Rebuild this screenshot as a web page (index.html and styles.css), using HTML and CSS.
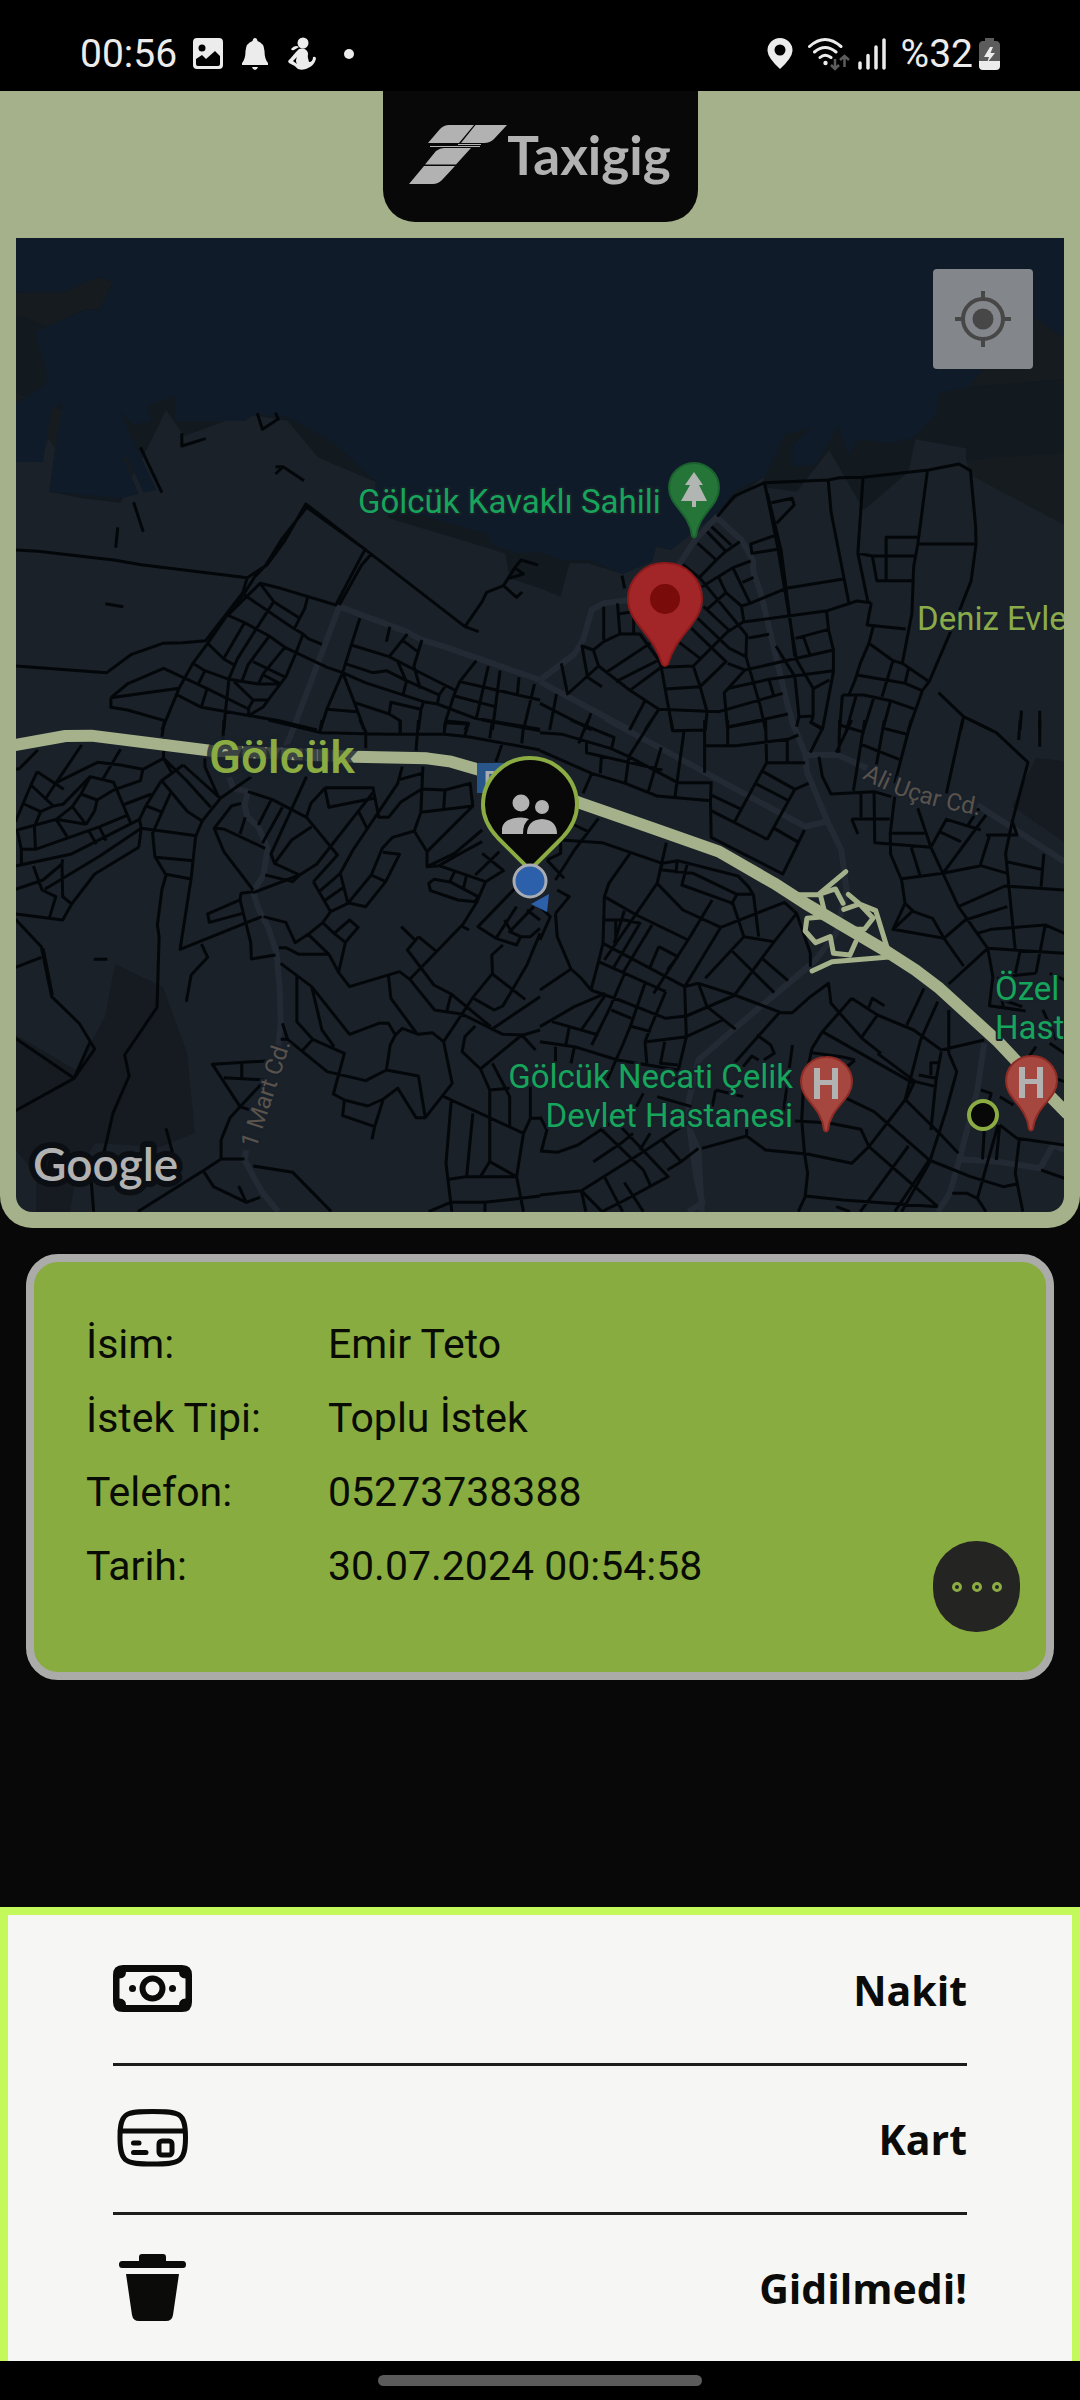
FILE: index.html
```html
<!DOCTYPE html>
<html lang="tr">
<head>
<meta charset="utf-8">
<meta name="viewport" content="width=device-width, initial-scale=1">
<title>Taxigig</title>
<link rel="stylesheet" href="styles.css">
</head>
<body>
<div class="status">
  <div class="status-left">
    <span>00:56</span>
    <svg width="32" height="34" viewBox="0 0 32 34"><path fill-rule="evenodd" d="M5 1H27Q31 1 31 5V28Q31 32 27 32H5Q1 32 1 28V5Q1 1 5 1ZM4 22V27Q4 29 6 29H26Q28 29 28 27V19L23 14L14 22L10 18ZM10 7.500A3.500 3.500 0 1 0 10 14.500A3.500 3.500 0 1 0 10 7.500Z"/></svg>
    <svg width="32" height="34" viewBox="0 0 32 34"><path d="M16 1Q18 1 18.500 4Q25 6 25.500 14Q25.500 22 29 26V28H3V26Q6.500 22 6.500 14Q7 6 13.500 4Q14 1 16 1ZM13 30H19Q18 33 16 33Q14 33 13 30Z"/></svg>
    <svg width="32" height="34" viewBox="0 0 32 34"><circle cx="17" cy="6" r="5.500"/><path d="M5 12Q9 7 13 10L8 13Q6 14 5 12ZM13 12Q20 10 22 16Q21 20 23 25Q27 25 27 20Q30 19 30 22Q28 28 24 30Q18 34 12 32Q8 28 3 26Q1 24 4 22L10 15ZM11 20L7 24L11 27Q9 24 11 20Z" fill-rule="evenodd"/></svg>
    <svg width="32" height="34" viewBox="0 0 32 34"><circle cx="16" cy="17" r="5"/></svg>
  </div>
  <div class="status-right">
    <svg width="26" height="34" viewBox="0 0 26 34"><path fill-rule="evenodd" d="M13 1A12.500 12.500 0 0 1 25.500 14Q25 21 13 32Q1 21 .5 14A12.500 12.500 0 0 1 13 1ZM13 7.500A5.500 5.500 0 1 0 13 18.500A5.500 5.500 0 1 0 13 7.500Z"/></svg>
    <div class="network">
      <svg width="42" height="34" viewBox="0 0 42 34"><g fill="none" stroke="#ececec" stroke-width="3" stroke-linecap="round"><path d="M1.500 9.500Q17 -4.500 33 9.500M6.500 15Q17 6 28 15M12 20.500Q17 16 23 20.500"/></g><circle cx="17.500" cy="26" r="2.200"/><path d="M27 22V31M23 28L27 32L31 28M36.500 30V19M32 23L36.500 19L41 23" fill="none" stroke="#5c5c5c" stroke-width="2.500"/></svg>
      <svg width="28" height="34" viewBox="0 0 28 34"><path d="M2 26V31M10 18.500V31M18 10V31M26 3V31" stroke="#ececec" stroke-width="3.500" stroke-linecap="round"/></svg>
    </div>
    <div class="battery">
      <span>%32</span>
      <svg width="21" height="34" viewBox="0 0 21 34"><path d="M6 1H15V4H18Q21 5 21 8V26H0V8Q0 5 3 4H6Z" fill="#5c5c5c"/><path d="M0 24H21V29Q21 33 17 33H4Q0 33 0 29Z"/><path d="M11 10L5 20H10L8 26L16 16H11.500L14 10Z"/></svg>
    </div>
  </div>
</div>

<main>
  <section class="map-frame">
    <header class="brand">
      <svg width="98" height="59" viewBox="409 125 98 59" fill="#b2b2b2"><path d="M428 143L440 129Q444 125 449 125H474L459 143ZM461 143L475.500 125H507L494 139Q490 143 484 143ZM458 144H481V145H458ZM430 146H480V147H430ZM425 164.500L436 151Q440 148 444 148H471L456 164.500ZM409 184L424 166H455L442 180Q438 184 433 184Z"/></svg>
      <span>Taxigig</span>
    </header>
    <div class="map">
      <svg class="map-canvas" viewBox="16 238 1048 974" role="img" aria-label="Gölcük">
        <rect x="16" y="238" width="1048" height="974" fill="#1a2129"/>
        <!-- coast and sea, west -->
        <g transform="translate(0 230) scale(.34439 .33333)">
          <path fill="#12191f" d="M45 20H1568V1075L1480 1045L1467 970L1130 865L1090 755L925 683L835 572L735 555L710 573L655 573L535 618L482 540L425 660L350 818L240 805L143 785L45 700Z"/>
          <path fill="#0f1b28" d="M45 20H1568V967L1500 970L1430 945L1410 910L1200 850L1090 820V755L970 640L835 560L735 555L710 573H508V497L425 530L440 573L388 585L345 540L390 640L455 780L350 805L143 785L160 655L180 520L150 535L125 695L45 698V520L78 502L130 467L137 440L103 305L135 290L245 240H290L327 158L288 140L185 187L45 188Z"/>
          <path fill="#161b20" d="M45 188L185 187L288 140L327 158L290 238H245L135 290L70 262L45 260ZM45 490L78 502L45 518Z"/>
          <path fill="#1a2129" d="M150 535L180 542L160 655L143 785L45 790V697L125 695ZM358 685L372 685L420 795L405 798Z"/>
          <path fill="#161b20" d="M150 535L180 542L160 655L140 625L134 645ZM358 685L372 685L390 728L382 742Z"/>
        </g>
        <!-- coast and sea, east -->
        <g transform="translate(540 230) scale(.34439 .33333)">
          <path fill="#12191f" d="M0 20H1523V670L1237 690V655L1090 628L1070 725L940 840L840 660L745 785L640 770L400 960L240 1032L140 1000H85L60 1100L0 1075Z"/>
          <path fill="#0f1b28" d="M0 20H1523V325L1440 265L1380 300L1245 470L1157 490L1150 555L1080 625L1015 640L920 628L897 678L865 588L800 705L733 710V645L787 595L712 612L655 738L565 785L515 850L380 960L338 950L325 995L240 1032L140 990H60L0 965Z"/>
          <path fill="#161b20" d="M1523 325L1440 265L1380 300L1245 470L1523 447ZM1237 690L1523 670V885L1250 735Z"/>
          <path fill="#1a2129" d="M380 960L515 850L650 740L640 850L400 1100L240 1032L325 995L338 950Z"/>
        </g>
        <path fill="#151b21" d="M115 964L163 987L187 1053L195 1133L160 1147L95 1143L76 1175L70 1212H36V1175L16 1150V1035L76 1070L105 1017ZM1036 758L1064 761V842L1012 806Z"/>
        <g class="avenue">
          <path transform="translate(0 230) scale(.34439 .33333)" d="M850 1500L985 1130L1180 1205L1225 1230L1290 1250L1568 1350"/>
          <path transform="translate(540 230) scale(.34439 .33333)" d="M0 1350L100 1272L125 1230L150 1140L185 1120L260 1110L400 1010L450 930L512 862L585 930L618 990L620 1030L640 1085L720 1430L740 1500M0 1355L260 1500"/>
          <path transform="translate(0 720) scale(.34439 .33333)" d="M862 0L830 80M665 170L678 205L720 215L710 255L718 290L750 320L777 385L765 465L735 515L750 565L780 625L803 700L812 800L815 910L807 990M715 1290L710 1320L760 1415L808 1475"/>
          <path transform="translate(540 720) scale(.34439 .33333)" d="M190 -5L770 320L830 305M730 0L770 100L775 155L835 305L875 390L890 510L860 640L800 720L640 860L560 930L460 1020L430 1150L435 1230L460 1290L470 1475M435 1230L455 1380L472 1450L430 1475M780 740L640 860M770 105H865L950 145M1270 255L1523 425M1290 970L1270 1110L1220 1310L1190 1420L1155 1475M1220 1318L1330 1325L1452 1345L1490 1275L1523 1290"/>
        </g>
        <g class="street">
          <path transform="translate(0 230) scale(.34439 .33333)" d="M45 960L110 964L330 990L410 1004L718 1043L775 1005L825 935L888 822L1060 958L1350 1190L1390 1205M718 1043L705 1088L597 1232L530 1238L473 1240L382 1273L310 1328L45 1308M888 835L820 925L770 1008L740 1040L708 1092L660 1155L603 1240L560 1300L520 1375L478 1480L470 1500M888 830L1060 958L975 1125L815 1075L755 1060L660 1157M1078 972L1050 1005L985 1125M1350 1190L1400 1115L1413 1087L1462 1067L1495 1013L1513 990L1562 1005M1495 1013L1520 1032L1475 1046M1462 1067L1500 1102L1516 1086M710 1095L845 1190L880 1212L895 1226L935 1243M755 1060L795 1115L868 1163M893 1102L885 1135L855 1195M795 1115L745 1195L690 1285L665 1345L655 1440L650 1500M660 1155L710 1178L782 1218L827 1252L950 1312L995 1328M710 1178L650 1285M603 1240L650 1287L680 1305M782 1218L720 1305L703 1352M827 1252L765 1330L750 1362M735 1295L830 1342M765 1335L812 1360M880 1212L855 1280L830 1340L780 1408L765 1430L722 1457V1435L735 1410L680 1355M560 1300L595 1322L665 1348L750 1362H812M595 1322L577 1360M735 1410H775M322 1403L370 1362L475 1315L600 1375L722 1437M322 1403L520 1375M322 1403V1432L370 1440L478 1472M600 1380L585 1430M515 1395L585 1432L810 1472L920 1500M1045 1165L1020 1245L995 1328L950 1435L930 1500M1132 1190L1122 1235M1183 1212L1130 1280M1170 1232L1213 1265M1225 1230L1202 1308L1220 1375M1020 1245L1130 1280L1205 1320L1320 1380M1155 1295L1180 1355L1170 1395M1000 1300L1082 1328L1122 1322L1180 1352L1275 1395L1292 1370M995 1328L1060 1358L1230 1415L1270 1422L1380 1465L1568 1498M995 1328L1030 1420L1058 1500M950 1438L1035 1445M1030 1418L1130 1452L1162 1472V1500M1130 1452L1135 1417L1222 1438M1230 1415L1222 1440L1215 1500M1383 1292L1335 1355L1320 1390L1295 1470L1290 1500M1335 1355L1568 1410M1418 1308L1383 1465M1452 1322L1430 1500M1507 1342L1502 1397M1552 1362L1520 1500M1320 1398L1438 1430M1275 1395L1270 1422M1295 1473L1360 1480L1350 1500M747 550L762 598L808 567L800 548M528 610V648L597 626M408 652L470 788M388 817L416 905M342 892L336 953M306 1121L358 1130M800 710H822L883 752M822 710L800 732"/>
          <path transform="translate(540 230) scale(.34439 .33333)" d="M515 860L565 798L652 758L837 750L870 743L938 742L1128 720L1217 702L1250 722L1265 890L1266 943L1252 1052L1215 1150L1130 1355L1110 1382L1070 1500M652 758L690 950L745 1290L793 1375V1458L753 1460M660 790L700 960L740 1280M672 818L732 805L738 825L687 880M685 915L612 942L615 970L690 958M837 750L845 845L897 1120M938 742L923 970L952 1115M1125 722L1097 942L1085 1010L1080 1150L1052 1300M923 970L965 978L1093 977M1097 942H1266M1097 922H1005V1050M965 978L978 1052H1085M962 1118L950 1185L1062 1197M968 1188L955 1240L930 1300L915 1350L898 1392M955 1240L1025 1292L1052 1300L1130 1355M1025 1292L993 1400M920 1335L1060 1360L1110 1382M1070 1315L1060 1360M878 1395H940L1018 1412L1090 1438M878 1395L870 1500M918 1397L890 1500M970 1400L940 1500M1018 1412L995 1500M1157 1388L1230 1460L1310 1500M1230 1460L1222 1500M1398 1442L1394 1500M1451 1442V1500M885 1046L715 1075L610 1120L585 1128M962 1118L920 1113L835 1142L590 1176L545 1205L445 1308M832 1142L838 1200L852 1260V1325L820 1500M742 1225L838 1198M765 1220L783 1272M852 1260L595 1320L545 1300M852 1322L665 1348L548 1375M840 1350L795 1375M685 1248L740 1340L752 1460L745 1490M787 1478L793 1460M787 1478L820 1498M485 905L538 962M498 890L555 945M580 935L538 965L512 990L465 1040M458 940L512 990M415 1003L465 1045L600 1215L598 1280L640 1430L655 1500M470 1070L560 1013L612 993M518 1040L540 1088L485 1138M560 1013L610 1120M588 1057L620 1042M540 1088L585 1128L592 1176M605 1224L665 1213M475 1130L548 1200M458 1165L550 1255L598 1280M440 1195L540 1295L465 1370M405 1238L465 1285M352 1312L445 1308L465 1370L485 1445L480 1500M365 1377L465 1370M595 1320L535 1388L545 1500M345 1438L520 1445L705 1390M665 1348L678 1395M545 1492L720 1452M238 1037L246 1075M185 1130V1230M225 1120L232 1212H290L345 1290L352 1312L385 1500M228 1152L270 1145M272 1150V1210M232 1212L185 1235L155 1260L170 1308L260 1380L345 1438L305 1500M155 1260L122 1248L138 1342L180 1370M170 1308L80 1392L62 1300M320 1240L195 1325M345 1290L220 1355M352 1312L260 1382M305 1412L260 1500M0 1420L150 1500M48 1392L28 1500M148 1450L130 1500"/>
          <path transform="translate(0 720) scale(.34439 .33333)" d="M478 0L470 50M650 0L647 75M780 0L930 38L1130 43H1290L1360 50L1568 90M935 0L928 38M1045 0L1062 35V85M1162 0V42M1215 0L1208 92M1290 40L1293 8L1360 12L1350 45M1430 0L1422 55M1520 20L1515 70M1460 65L1440 125M1400 0L1568 32M237 75L165 185L130 240M45 147H55L110 90M350 88L297 180M475 115L415 148L350 135L283 127L165 187M475 55V115L497 155M415 148L408 182L330 210M108 155L90 195L45 305M108 155L185 208M90 195L155 258L183 253L262 170L330 187L380 310M70 252L118 275L155 258M118 275L100 320L103 388H62L50 330L163 298L195 350M163 298L210 260L235 222L262 170M210 260L250 313M163 298L250 313M275 272L282 240L235 222M282 240L330 210M250 313L275 272M62 388V435M103 388L290 320L367 287M405 298L205 403L45 438M410 325L290 408L130 508M258 333L280 372M288 320L308 362M45 508L125 480L180 432L182 418M97 438L122 510L162 530L143 595M180 432L182 530L208 552M403 382L275 462L208 552L182 600L45 582M405 298L410 325L403 382M410 325L570 347M357 255L440 222M468 183L425 255L405 298M425 258L467 275M497 215L443 340L450 410L482 465M468 180L545 275L587 303M475 115L540 180L612 262M587 303L568 350L555 475L523 688L760 590M532 135L468 183M532 135L640 235L587 303M595 115V140L635 232M640 235L730 170M450 412L562 422M482 463L555 477M482 465L470 510L457 615L462 650L456 862L362 1005L375 1068L328 1180L298 1315L265 1385L272 1475M585 672L603 712L555 765L541 845M45 598L120 680L150 830L230 910L275 987L215 1075L45 1172M125 685L152 825M120 712L45 742M45 955L215 1075L262 965M272 718H312M720 215L790 238L890 292L980 405L910 485M788 238L750 315M820 262L762 370M700 250L672 258L622 325L650 395L735 510M622 325L650 327L770 385M712 292L697 342M890 170L787 402L797 430L870 465L735 518M943 205L903 250L890 290M943 203H1083L1100 292H1128L1165 245L1225 207L1292 210L1365 190L1373 258L1222 277M943 203L955 262L1085 235M1085 215L920 432L870 465L850 485L770 465M1040 272L1068 330M905 320L847 360L797 430M1168 140L1155 190L1025 390L988 460L930 512M1228 140L1222 277L1203 333L1140 352L1110 385L1078 465L1010 550L960 575L910 485M1155 180L1225 160M1292 210L1288 272M1203 333L1240 395V440L1320 400L1400 330M1373 258L1240 395M1112 397L1160 403L1120 485L1062 560L1010 548M1078 465L1120 485M988 460L1010 548M945 540L1000 500M1245 490L1260 478L1310 487L1388 530L1380 545L1330 540L1250 512ZM1240 440L1275 437L1410 485L1465 450M1320 455L1305 487M1355 465L1345 508M1400 400L1460 450M1380 465L1450 395M1275 437L1320 410L1400 365M1410 485L1385 545L1345 612L1190 778L1160 755L1015 800L983 757L955 703L895 643M1340 618L1362 630M960 575L937 608L895 643L857 668L830 607L765 590M937 608L970 640L1015 600L1040 622L1003 667L983 757M970 640L1003 667M697 540L603 582L608 607L705 580M735 515L700 520L697 540L728 667L730 717L800 705M810 683H830L868 703H955M815 730L905 800L1015 943L1100 910H1128L1148 945L1168 925L1215 943L1255 938L1288 965L1313 1090L1235 1193H1208L1155 1105L1113 1137L1068 1158L1000 1140L968 1122L1000 1000L908 958L862 905V768M905 800L935 930L970 980M820 910L835 958L950 1055L1062 1082L1122 1050L1215 1068L1235 1193M908 958L878 992M1148 945L1133 975L1122 1050M815 958H835M1128 768L1135 835L1210 940M1165 620L1207 662M1215 650L1183 690L1260 795L1310 822L1425 920M1215 650L1268 695M1190 778L1262 870L1343 883L1460 943L1520 945L1568 930M1310 822L1297 875M1288 965L1375 830L1430 760L1428 705L1460 675M1375 835L1435 870L1460 858L1530 735L1568 640M1430 762L1525 838M1425 930L1568 830M1500 500L1388 620L1440 655L1500 675L1512 650L1480 635L1550 560M1380 918L1350 950L1342 995L1395 1047L1515 945L1555 990M1395 1047L1422 1110V1325L1500 1370L1520 1240L1283 1127M1422 1110L1480 1105M1430 1030L1480 1130V1222M1310 1145L1295 1330L1312 1475M1373 1180L1355 1370M1303 1378L1353 1370H1500L1520 1475M1422 1325L1395 1370M1245 1475L1308 1447H1408L1568 1428M1408 1447V1475M1520 1240L1540 1195H1568M1540 1195V1100M1000 1140L995 1187L1088 1220L1080 1258M1113 1137L1088 1220M785 1022L617 1033L697 1160L770 1080L650 1073M702 1030V1072M697 1160L735 1173M697 1160L668 1193L642 1260V1317H710M642 1317L590 1352L400 1475M590 1352L620 1400L715 1447L755 1432M715 1447L693 1398M735 1338L850 1357L962 1475M482 1225L508 1325M1465 600L1485 635M1440 655L1500 560M1530 570L1568 600M1512 650L1540 650L1568 625"/>
          <path transform="translate(540 720) scale(.34439 .33333)" d="M0 38L65 43L205 85L258 110L400 188M0 92L150 160L248 190L340 228L495 242M150 160L125 220M178 112L175 160M135 68V98L355 150M140 0L112 70M90 0L215 52L208 85M325 0L258 110L248 190M352 82L313 220M418 35L392 230M380 0L385 32L478 30M478 0V158M478 77H570L720 58L750 45M545 0V77M655 0L658 128H770M718 57V128M658 128L565 305M648 155L740 208L780 190M740 208L660 358M625 190L718 240M400 188H497L495 242L497 352L705 462L768 330M497 225L585 268M497 272L660 358M680 325L752 368M548 20L655 0M783 5L820 25L785 98M870 0L868 98M905 0L860 98M870 15L943 38M943 0L910 212M1000 0L975 145M998 25L1063 42M1078 0L1030 190M930 72L1043 118M810 110L820 170L845 222L970 215L1020 230M932 218V292M970 218L972 368L1135 382M905 297H1015M905 297L923 342M1030 230L1017 340L1018 402L1050 480L1060 550L1025 628L1173 655L1235 600L1357 560M1018 340H1117M1045 477L1170 460L1280 437L1357 460M1078 382L1103 465M1097 265L1135 382L1215 560L1300 685L1315 770L1305 857L1410 873M1227 0L1180 220M1250 0L1325 38L1417 127L1370 310L1352 400L1380 690M1394 0L1390 60M1451 0V80M1135 382L1180 298L1280 330M1295 345H1385L1370 300M1160 335L1222 365M1295 285L1170 460M1275 265L1240 320M1305 348L1278 437M1355 425L1455 448M1463 402L1455 500M1215 560L1350 498L1523 510M1270 640L1310 628L1467 615L1523 640M1300 685L1523 700M1173 655L1230 738M1060 550L1085 575L1140 595L1173 655M1025 628L1080 575M1187 792L1300 685M1467 615L1440 760M1395 690L1380 760M1345 770L1440 760M60 360L180 368L355 430L400 422L575 468L605 500L620 525L635 650M265 395L200 490L187 530L183 670L170 725L148 810M367 368L340 490L187 720M355 430L340 490L415 570L525 622L710 547L745 580L680 665L565 825M427 435L412 495L560 550M398 422L395 460M355 450L445 460L572 523H620M572 523L555 555M187 530L280 585L430 660M500 540L430 660L330 820M525 622L420 800M187 600H245L290 610L215 740M220 600V675M325 615L240 760M245 572L215 670M183 670L420 800L460 790L565 825L700 878H733L785 830L838 790L845 850L935 955L990 1000M170 725L365 815M560 550L592 650L680 665M592 650L480 775M745 580L785 700V740M645 715L720 782M555 690L680 818M460 790L485 860L568 928M345 680L400 710L370 750M345 680L318 745M245 762L200 870L150 975M305 790L262 920L240 975M365 815L318 930L305 965M148 810L230 840M207 870L265 895M230 840L365 895L425 888L568 825M420 800L425 950L310 965M425 950L530 900M262 918L322 935M0 920L100 860L190 820M0 810L90 747L120 775L148 810M35 905L170 945M85 920L75 975M0 965L100 980L225 1020L400 1050M45 980V1030M100 980L90 1030M190 825L120 930M305 965L310 1030M362 965L350 1030L400 1035M425 950L395 1080M240 975L195 1080M45 580L50 650L90 747M0 560L30 590L0 660M20 420L70 475M50 510L85 530L45 580M170 295L100 390L45 480M60 360V400L20 420M100 315L140 335M695 878L555 1040M630 945L670 975L680 1000L650 1020M733 975L705 1190M590 1040L615 1008L635 1020M980 1000L1090 1085M905 835L980 885L1085 930L1165 990M1187 1000L1210 1055L1180 1170L1130 1330L1050 1475M905 835L820 935L790 985L765 1100L760 1200L768 1300L777 1360L770 1430L750 1475M820 935L1085 1090L1062 1140L1160 1240L1215 1300M980 885L935 950M955 862L965 835L1000 857M1115 805L1065 915M1155 845L1105 960L1060 1140M1187 870V1000M1165 990L1290 960M1165 995L1150 1080L1135 1230M790 998L875 1010L915 1020M1090 1085L1150 1100M1100 1065L1150 1075M1135 1065V1028H1162M915 1020L880 1050M890 1135L970 1175L1130 1320L1250 1370L1345 1400L1385 1392M740 1203L835 1208L932 1228L955 1280L1155 1460M955 1280L905 1330L780 1303L655 1290L600 1248L470 1285M1060 1140L955 1280M1070 1278L930 1475M1130 1320L1030 1475M770 1428L880 1440L1155 1460M1197 1420H1240L1270 1435L1295 1475M1330 1215L1270 1435M1290 1232L1285 1318M1335 1215L1325 1320M1335 1215L1385 1255L1523 1275M1392 1255L1380 1360L1402 1475M1455 1350L1523 1375M1335 1130L1375 1155M1280 1110L1310 1120L1300 1160M860 1460L900 1475M0 1293L50 1297L110 1275L190 1220L240 1180M155 1325L235 1270L270 1240M0 1425L120 1412L300 1295L440 1200M120 1412L133 1475M120 1412L180 1475M188 1372L240 1475M245 1388L300 1475M175 1225L300 1350L320 1395M230 1215L372 1370L247 1440L180 1475M350 1255L410 1325L460 1285M410 1325L370 1350M320 1240L290 1290M600 1248V1220M340 1130L440 1160M300 1120L280 1160M510 1110L500 1160M510 1110L590 1130M1345 840L1400 860M1480 970L1523 1000M1440 980L1400 1040M1460 870L1500 960M0 1190L20 1230L5 1290M1330 770L1345 860M1480 760L1523 780M1480 1070L1523 1085"/>
        </g>
        <g class="highway">
          <path transform="translate(0 720) scale(.34439 .33333)" d="M40 76L190 48L265 47L610 92L1030 110L1240 115L1310 125L1400 152L1568 200L1673 245"/>
          <path transform="translate(540 720) scale(.34439 .33333)" d="M0 200L105 245L320 322L520 395L680 490L770 550L1000 690L1090 750L1160 805L1330 965L1440 1085L1530 1180"/>
          <path class="ramp" transform="translate(540 720) scale(.34439 .33333)" d="M745 524H808L888 455M808 524L858 507L880 550M815 528L825 570M882 568L928 552L895 523M928 552L975 572L1010 690L1035 715M928 552L967 595L942 628H910M825 590L775 595L770 633L800 668L843 650L852 700L900 705L917 665M790 753L848 725L1005 712L1035 710"/>
        </g>
        <!-- place labels -->
        <g class="poi-label">
          <text x="358" y="513">Gölcük Kavaklı Sahili</text>
          <text x="793" y="1088" text-anchor="end">Gölcük Necati Çelik</text>
          <text x="793" y="1127" text-anchor="end">Devlet Hastanesi</text>
          <text x="995" y="1000">Özel</text>
          <text x="995" y="1039">Hast</text>
        </g>
        <text class="district" x="917" y="630">Deniz Evle</text>
        <text class="town" x="209" y="773">Gölcük</text>
        <text class="road-name" transform="translate(256 1149) rotate(-72)">1 Mart Cd.</text>
        <path id="ali-ucar" fill="none" d="M862 778Q905 804 990 817"/>
        <text class="road-name"><textPath href="#ali-ucar">Ali Uçar Cd.</textPath></text>
        <text class="google" x="33" y="1181">Google</text>
        <!-- pins -->
        <path d="M477 763H505V793H477Z" fill="#28568a"/><text class="parking" x="484" y="788">P</text>
        <path d="M694 463A25 25 0 0 1 719 488C719 506 699 513 696 536Q694 539 692 536C690 513 669 506 669 488A25 25 0 0 1 694 463Z" fill="#257539" stroke="#1b6230" stroke-width="2"/>
        <path d="M694 472L703 485H699L707 501H696V507H692V501H681L690 485H685Z" fill="#b1b6b2"/>
        <path d="M665 563A36 36 0 0 1 702 599C702 623 676 634 668 664Q665 668 662 664C654 634 628 623 628 599A36 36 0 0 1 665 563Z" fill="#a22527" stroke="#8d1a1b" stroke-width="2"/><circle cx="665" cy="599" r="15" fill="#790b0a"/>
        <g id="hospital"><path d="M826 1057A25 25 0 0 1 852 1082C852 1100 830 1107 828 1130Q826 1133 824 1130C822 1107 801 1100 801 1082A25 25 0 0 1 826 1057Z" fill="#a5463f" stroke="#902c26" stroke-width="2"/><path d="M814 1068H820V1080H832V1068H838V1099H832V1085H820V1099H814Z" fill="#b2b2b2"/></g>
        <use href="#hospital" x="205" y="-1"/>
        <circle cx="983" cy="1115" r="14" fill="#080808" stroke="#8bab43" stroke-width="4"/>
        <path d="M530 758A47 47 0 0 1 577 805Q577 822 562 838L530 870L498 838Q483 822 483 805A47 47 0 0 1 530 758Z" fill="#080808" stroke="#8bab43" stroke-width="4"/>
        <path d="M521 794.500A8.500 8.500 0 1 0 521 811.500A8.500 8.500 0 1 0 521 794.500ZM542 800A7 7 0 1 0 542 814A7 7 0 1 0 542 800ZM502 834V828Q504 818 521 817.500Q526 817.500 529 819Q523 823 523 834ZM527 834Q527 820 542 819Q557 820 557 834Z" fill="#b2b2b2"/>
        <path d="M531 904L549 894L547 912Z" fill="#2d60aa"/><circle cx="530" cy="881" r="16" fill="#2d60aa" stroke="#a9adb3" stroke-width="3"/>
      </svg>
      <button class="locate" aria-label="Konumum"><svg width="60" height="60" viewBox="-30 -30 60 60"><g fill="none" stroke="#474747" stroke-width="4"><circle r="20"/><path d="M0 -20V-28M0 20V28M-20 0H-28M20 0H28"/></g><circle r="10.500" fill="#474747"/></svg></button>
    </div>
  </section>

  <section class="request">
    <dl class="details">
      <dt>İsim:</dt><dd>Emir Teto</dd>
      <dt>İstek Tipi:</dt><dd>Toplu İstek</dd>
      <dt>Telefon:</dt><dd>05273738388</dd>
      <dt>Tarih:</dt><dd>30.07.2024 00:54:58</dd>
    </dl>
    <button class="more" aria-label="Seçenekler"><svg width="50" height="12" viewBox="0 0 50 12" fill="none" stroke="#8bab43" stroke-width="3"><circle cx="5" cy="6" r="3.500"/><circle cx="25" cy="6" r="3.500"/><circle cx="45" cy="6" r="3.500"/></svg></button>
  </section>
</main>

<section class="sheet">
  <button class="option">
    <svg width="80" height="80" viewBox="0 0 80 80"><path fill-rule="evenodd" d="M10 15H69Q79 15 79 25V52Q79 62 69 62H10Q0 62 0 52V25Q0 15 10 15ZM13 22Q13 28 6.500 28.500V48.500Q13 49 13 55H66Q66 49 72.500 48.500V28.500Q66 28 66 22Z"/><circle cx="39.500" cy="38.500" r="10" fill="none" stroke="#0b0b09" stroke-width="6"/><circle cx="19.500" cy="38.500" r="3.500"/><circle cx="59.500" cy="38.500" r="3.500"/></svg>
    <span>Nakit</span>
  </button>
  <button class="option">
    <svg width="80" height="80" viewBox="0 0 80 80" fill="none" stroke="#0b0b09" stroke-width="5" stroke-linecap="round"><path d="M39.500 12.500C66 12.500 72.500 13 72.500 38.500S66 65 39.500 65S7 64 7 38.500S13 12.500 39.500 12.500ZM7 32H72M20.500 44H26M20.500 53.500H33"/><rect x="46" y="42" width="13" height="14" rx="3"/></svg>
    <span>Kart</span>
  </button>
  <button class="option">
    <svg width="80" height="80" viewBox="0 0 80 80"><path d="M29 6H50Q53 6 53 9V13H70Q73 13 73 16.500T70 20H9Q6 20 6 16.500T9 13H26V9Q26 6 29 6ZM13 26H66L60 67Q59 73 53 73H26Q20 73 19 67Z"/></svg>
    <span>Gidilmedi!</span>
  </button>
</section>
<div class="gesture"><span></span></div>
</body>
</html>
```
FILE: styles.css
```css
* { box-sizing: border-box; }
body {
  margin: 0;
  min-height: 100vh;
  display: flex;
  flex-direction: column;
  background: #080808;
  font-family: Roboto, "Noto Sans", sans-serif;
}
svg { display: block; flex: none; }
button { border: 0; padding: 0; font: inherit; color: inherit; cursor: pointer; }

.status {
  height: 91px;
  padding: 16px 80px 0;
  display: flex;
  align-items: center;
  justify-content: space-between;
  background: #000;
  color: #ececec;
  fill: #ececec;
  font-size: 39px;
  line-height: 48px;
}
.status-left, .status-right { display: flex; align-items: center; gap: 15px; }
.network { display: flex; gap: 8px; }
.battery { display: flex; align-items: center; gap: 6px; }

main { flex: 1; }
.map-frame {
  padding: 0 16px 16px;
  background: #a5b18a;
  border-radius: 0 0 32px 32px;
}
.brand {
  width: 315px;
  height: 131px;
  margin: 0 auto 16px;
  padding-bottom: 4px;
  display: flex;
  align-items: center;
  justify-content: center;
  background: #080808;
  border-radius: 0 0 32px 32px;
  color: #b2b2b2;
  font: 700 53px/62px Lato, sans-serif;
}
.map {
  position: relative;
  overflow: hidden;
  border-radius: 0 0 16px 16px;
}
.map-canvas { width: 100%; height: auto; }
.map-canvas path { vector-effect: non-scaling-stroke; }
.avenue, .street, .highway { fill: none; stroke-linejoin: round; }
.avenue { stroke: #242a34; stroke-width: 6px; }
.street { stroke: #04070a; stroke-width: 3px; }
.highway { stroke: #a5b18a; stroke-width: 12px; stroke-linecap: round; }
.ramp { stroke-width: 5px; }
.poi-label { fill: #17a45b; font-size: 33px; }
.district { fill: #8bab4a; font-size: 33px; }
.town { fill: #8bab43; font-size: 47px; font-weight: 500; }
.road-name { fill: #5a534b; font-size: 24px; }
.town, .poi-label, .road-name, .district, .google { paint-order: stroke; stroke: #18202a; stroke-width: 4px; stroke-linejoin: round; }
.town { stroke-width: 9px; stroke-opacity: .75; }
.google { fill: #b2b2b2; stroke: #0b0f14; stroke-width: 12px; font: 600 46px Lato, sans-serif; }
.parking { fill: #a9adb3; font-size: 24px; font-weight: 700; }
.locate {
  position: absolute;
  top: 31px;
  right: 31px;
  width: 100px;
  height: 100px;
  display: grid;
  place-items: center;
  background: #83868a;
  border-radius: 4px;
}

.request {
  margin: 26px 26px 0;
  padding: 45px 26px 40px 52px;
  display: flex;
  justify-content: space-between;
  border: 8px solid #ababa9;
  border-radius: 32px;
  background: #88ac40;
  color: #080c04;
}
.details {
  flex: 1;
  margin: 0 0 29px;
  display: grid;
  grid-template-columns: 242px 1fr;
  font-size: 41px;
  line-height: 74px;
}
.details dd { margin: 0; }
.more {
  align-self: flex-end;
  width: 87px;
  height: 91px;
  display: grid;
  place-items: center;
  border-radius: 43px;
  background: #242422;
}

.sheet {
  padding: 2px 105px 0;
  border: 8px solid #c4f95c;
  border-bottom: 0;
  background: #f6f6f4;
}
.option {
  width: 100%;
  height: 149px;
  display: flex;
  align-items: center;
  justify-content: space-between;
  border-bottom: 3px solid #1d1d1b;
  background: none;
  color: #0b0b09;
  fill: #0b0b09;
  font: 700 41px/54px "Open Sans", sans-serif;
}
.option:last-child { height: 146px; border-bottom: 0; }
.gesture {
  height: 39px;
  padding-top: 14px;
  background: #000;
}
.gesture span {
  display: block;
  width: 30%;
  height: 11px;
  margin: 0 auto;
  border-radius: 6px;
  background: #5b5b5b;
}
```
